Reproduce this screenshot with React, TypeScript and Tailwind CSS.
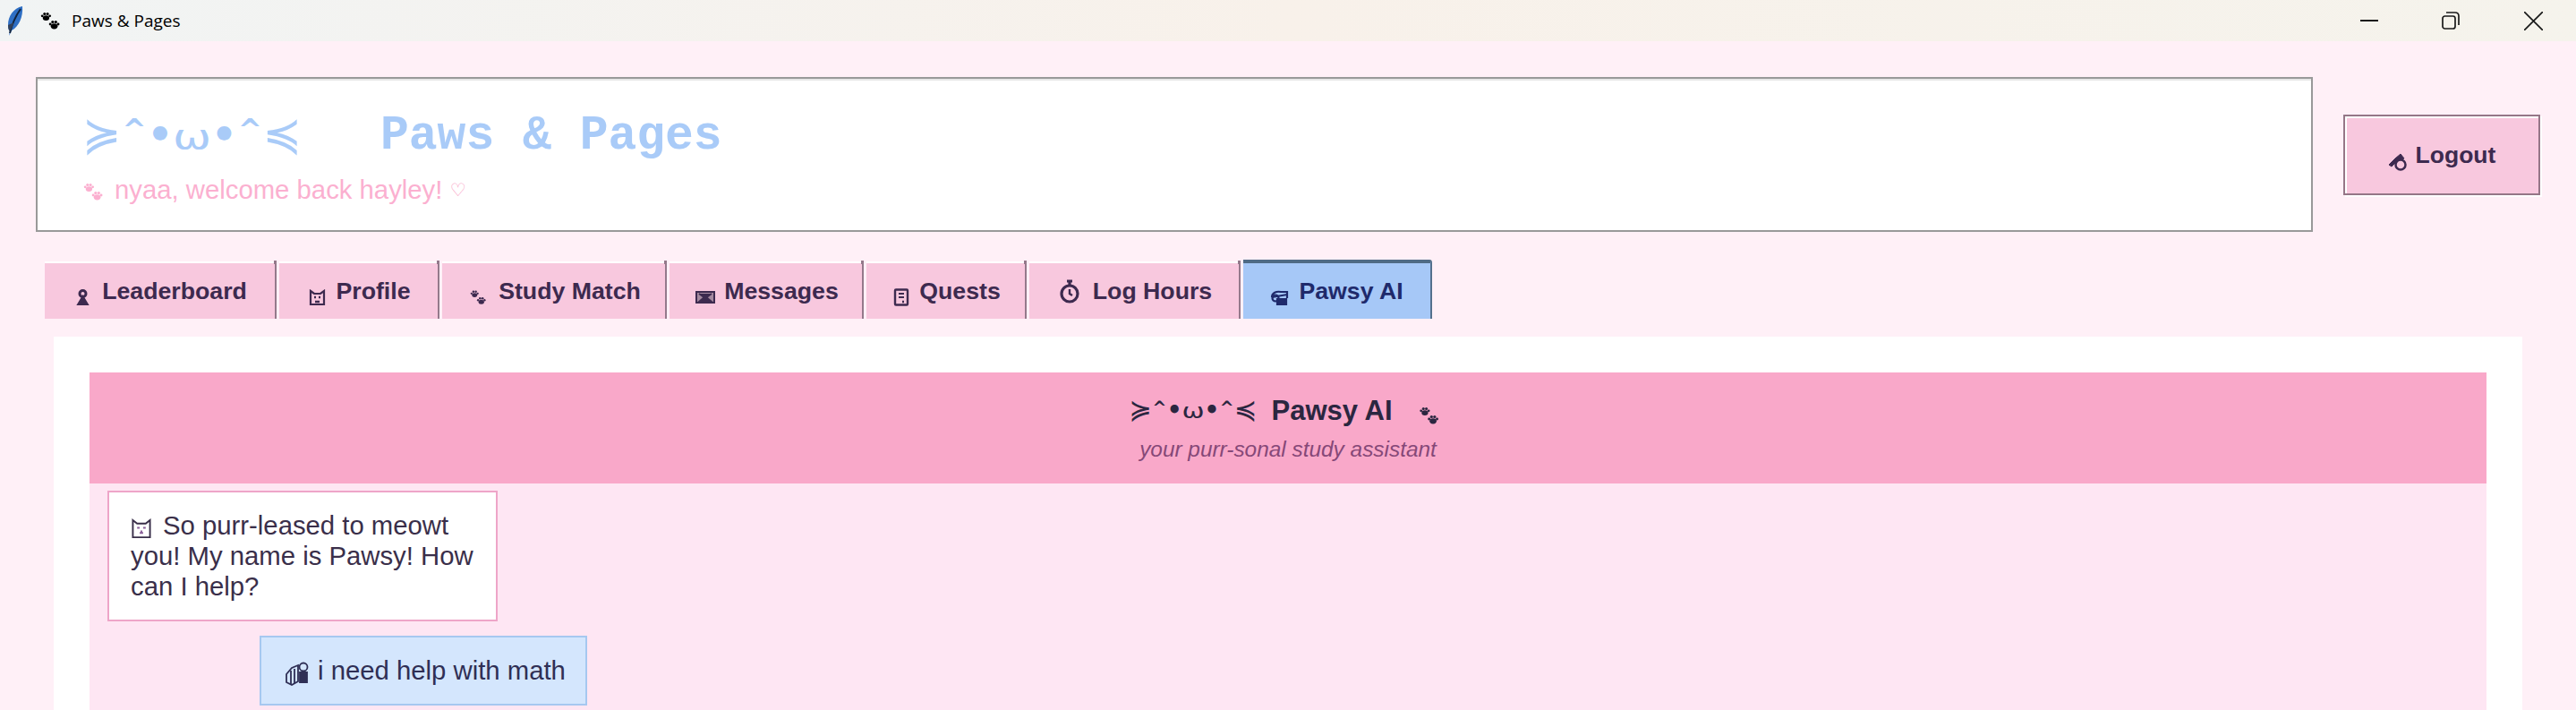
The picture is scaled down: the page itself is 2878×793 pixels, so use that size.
import React from "react";

const arial = "font-['Liberation_Sans','Arial',sans-serif]";

const PawPrint = ({ cx, cy, r }: { cx: number; cy: number; r: number }) => (
  <g>
    <ellipse cx={cx} cy={cy + r * 0.45} rx={r} ry={r * 0.8} />
    <circle cx={cx - r * 1.15} cy={cy - r * 0.15} r={r * 0.38} />
    <circle cx={cx - r * 0.45} cy={cy - r * 0.8} r={r * 0.42} />
    <circle cx={cx + r * 0.45} cy={cy - r * 0.8} r={r * 0.42} />
    <circle cx={cx + r * 1.15} cy={cy - r * 0.15} r={r * 0.38} />
  </g>
);

const Paws = ({ className }: { className: string }) => (
  <svg viewBox="0 0 24 24" fill="currentColor" className={className}>
    <PawPrint cx={7} cy={7} r={4} />
    <PawPrint cx={17} cy={17} r={4.2} />
  </svg>
);

// the cat face, sizes are in em so it works for both headings
const Kaomoji = ({ className }: { className: string }) => (
  <span className={`inline-flex items-center font-['DejaVu_Sans',sans-serif] font-normal leading-none ${className}`}>
    <span className="text-[1.45em]">≽</span>
    <span className="-mt-[0.3em] ml-[0.02em] text-[0.9em] font-bold">^</span>
    <span className="mx-[0.02em] text-[1.25em] font-bold">•</span>
    <span className="mt-[0.15em] scale-x-[1.3] px-[0.1em] text-[1.1em]">ω</span>
    <span className="mx-[0.02em] text-[1.25em] font-bold">•</span>
    <span className="-mt-[0.3em] mr-[0.02em] text-[0.9em] font-bold">^</span>
    <span className="text-[1.45em]">≼</span>
  </span>
);

const TrophyIcon = () => (
  <svg viewBox="0 0 17 18" className="mt-[14px] h-[18px] w-[17px]" fill="none" stroke="currentColor" strokeWidth="3">
    <circle cx="8.5" cy="5" r="3.5" />
    <path d="M4 16.5 L8.5 9 L13 16.5 Z" fill="currentColor" />
  </svg>
);

const CatFaceIcon = () => (
  <svg viewBox="0 0 19 19" className="mt-[14px] h-[19px] w-[19px]" fill="none" stroke="currentColor" strokeWidth="2.2">
    <path d="M2 2 L6 5 H13 L17 2 V17 H2 Z" />
    <path d="M6 9 H8 M11 9 H13 M7 14 H12" strokeWidth="2.4" />
  </svg>
);

const EnvelopeIcon = () => (
  <svg viewBox="0 0 22 14" className="mt-[14px] h-[14px] w-[22px]" fill="none" stroke="currentColor" strokeWidth="2">
    <rect x="1" y="1" width="20" height="12" fill="#a58aa0" />
    <path d="M4 3 L11 8 L18 3 M4 12 L11 6 L18 12 Z" fill="currentColor" />
  </svg>
);

const BookIcon = () => (
  <svg viewBox="0 0 18 20" className="mt-[14px] h-[20px] w-[18px]" fill="none" stroke="currentColor" strokeWidth="2.4">
    <rect x="2" y="1.5" width="14" height="17" rx="1" />
    <path d="M6 6 H12 M6 10 H12" strokeWidth="2" />
    <path d="M10 15 H12" strokeWidth="2.5" />
  </svg>
);

const StopwatchIcon = () => (
  <svg viewBox="0 0 24 27" className="h-[27px] w-[24px]" fill="none" stroke="currentColor" strokeWidth="3.2">
    <path d="M9 2 H15 M12 2 V7" />
    <circle cx="12" cy="16" r="9" />
    <path d="M12 11 V16 L15 18" strokeWidth="2.4" />
  </svg>
);

const RobotCatIcon = () => (
  <svg viewBox="0 0 21 17" className="mt-[14px] h-[17px] w-[21px]" fill="none" stroke="currentColor" strokeWidth="2.2">
    <path d="M2 8 C2 3 7 1 12 2 L19 2 V9 M2 8 L19 5" />
    <circle cx="6" cy="9" r="3.5" />
    <path d="M8 10 H18 V16 H8 Z" fill="currentColor" />
  </svg>
);

const LogoutIcon = () => (
  <svg viewBox="0 0 21 20" className="mt-[14px] h-[20px] w-[21px]" fill="none" stroke="currentColor">
    <path d="M1 13 L8 6 L14 1 L18 6 L10 9 L4 15 Z" fill="currentColor" />
    <circle cx="14" cy="13" r="5.5" strokeWidth="2.5" />
  </svg>
);

const tabs = [
  { label: "Leaderboard", icon: <TrophyIcon />, width: "w-[259px]", gap: "gap-[13px]" },
  { label: "Profile", icon: <CatFaceIcon />, width: "w-[179px]", gap: "gap-[11px]" },
  { label: "Study Match", icon: <Paws className="mt-[14px] h-[18px] w-[20px]" />, width: "w-[251px]", gap: "gap-[13px]" },
  { label: "Messages", icon: <EnvelopeIcon />, width: "w-[217px]", gap: "gap-[10px]" },
  { label: "Quests", icon: <BookIcon />, width: "w-[179px]", gap: "gap-[11px]" },
  { label: "Log Hours", icon: <StopwatchIcon />, width: "w-[236px]", gap: "gap-[14px]" },
];

export default function App() {
  return (
    <div className={`h-[793px] w-[2878px] overflow-hidden bg-[#fff0f7] ${arial}`}>
      {/* title bar */}
      <div className="flex h-[46px] items-center bg-gradient-to-r from-[#f1f4f4] via-[#f8f1ea] to-[#f5f3ec]">
        <svg viewBox="0 0 18 32" className="ml-[8px] h-[34px] w-[18px]">
          <path d="M17 0 C7 2 1 11 1 21 C1 25 2 27 3 28 L2 33 L5 27 C13 23 18 12 17 0 Z" fill="#2f6fc4" />
          <path d="M15 3 C10 10 6 18 3 30" stroke="#10243f" strokeWidth="2" fill="none" />
          <path d="M1 21 C1 25 2 27 3 28 L8 18 Z" fill="#33415a" />
        </svg>
        <Paws className="ml-[18px] h-[22px] w-[24px] text-black" />
        <span className="ml-[12px] font-['Open_Sans',sans-serif] text-[19px] text-black">Paws &amp; Pages</span>
        <div className="ml-auto flex items-center">
          <svg viewBox="0 0 20 20" className="mr-[71px] h-[20px] w-[20px]" stroke="#1a1a1a" strokeWidth="2" fill="none">
            <path d="M0 10 H20" />
          </svg>
          <svg viewBox="0 0 20 20" className="mr-[72px] h-[20px] w-[20px]" stroke="#1a1a1a" strokeWidth="1.7" fill="none">
            <rect x="1" y="5" width="14" height="14" rx="2.5" />
            <path d="M5 1 H15 Q19 1 19 5 V15" />
          </svg>
          <svg viewBox="0 0 21 21" className="mr-[37px] h-[21px] w-[21px]" stroke="#1a1a1a" strokeWidth="1.7" fill="none">
            <path d="M0 0 L21 21 M21 0 L0 21" />
          </svg>
        </div>
      </div>

      <div className="px-[40px] pt-[40px]">
        {/* header */}
        <div className="flex items-center">
          <div className="h-[173px] w-[2544px] border-2 border-[#999999] bg-white pl-[50px] pt-[28px] shadow-[inset_0_2px_0_#e6e6e6]">
            <div className="flex h-[72px] items-center font-['Liberation_Mono',monospace] text-[53px] font-bold leading-none text-[#a9cbf8]">
              <span className="w-[333px]">
                <Kaomoji className="text-[36px]" />
              </span>
              <span>Paws &amp; Pages</span>
            </div>
            <div className="mt-[2px] flex items-center text-[29.3px] text-[#fbb0d0]">
              <Paws className="mr-[12px] mt-[4px] h-[22px] w-[24px]" />
              <span>nyaa, welcome back hayley!</span>
              <span className="ml-[8px] font-['DejaVu_Sans',sans-serif] text-[20px] font-bold text-[#f9a0c4]">♡</span>
            </div>
          </div>
          <button className="ml-[34px] flex h-[90px] w-[220px] items-center justify-center gap-[10px] border-2 border-[#957687] bg-[#f8c8de] pt-[3px] text-[26.5px] font-bold text-[#3d2a4f] shadow-[inset_2px_2px_0_#ffffff,2px_2px_0_#ffffff]">
            <LogoutIcon />
            Logout
          </button>
        </div>

        {/* tabs */}
        <div className="ml-[10px] mt-[31px] flex items-end gap-[3px]">
          {tabs.map((tab) => (
            <div
              key={tab.label}
              className={`relative flex h-[64px] items-center justify-center border-r-2 border-t-2 border-r-[#94798b] border-t-white bg-[#f8c8de] pl-[3px] text-[26.7px] font-bold text-[#3d2a4f] ${tab.width} ${tab.gap}`}
            >
              {tab.icon}
              <span>{tab.label}</span>
              <span className="absolute -right-[2px] -top-[3px] h-[4px] w-[3px] bg-[#94798b]" />
            </div>
          ))}
          <div className="flex h-[66px] w-[211px] items-center justify-center gap-[11px] rounded-tr-[3px] border-r-2 border-t-[4px] border-r-[#54708c] border-t-[#4f6b85] bg-[#a6c8f7] text-[26.7px] font-bold text-[#1f2a6b]">
            <RobotCatIcon />
            <span>Pawsy AI</span>
          </div>
        </div>

        {/* panel */}
        <div className="mx-[20px] mt-[20px] h-[500px] bg-white px-[40px] pt-[40px]">
          <div className="flex h-[124px] flex-col items-center bg-[#f9a8c9] pt-[20px]">
            <div className="flex h-[44px] items-center text-[31px] font-bold leading-none text-[#2b2640]">
              <Kaomoji className="text-[21px]" />
              <span className="ml-[16px]">Pawsy AI</span>
              <Paws className="ml-[28px] mr-[8px] mt-[12px] h-[22px] w-[25px]" />
            </div>
            <div className="mt-[10px] text-[24.4px] italic leading-none text-[#864878]">your purr-sonal study assistant</div>
          </div>

          <div className="h-[300px] bg-[#fee6f3] pl-[20px] pt-[8px]">
            <div className="w-[436px] whitespace-nowrap border-2 border-[#eea5c8] bg-white px-[24px] pb-[20px] pt-[20px] text-[29.3px] leading-[34px] text-[#3a2f4a]">
              <div className="flex items-center">
                <svg viewBox="0 0 24 24" fill="none" stroke="currentColor" strokeWidth="2" className="mr-[12px] mt-[6px] h-[23px] w-[24px]">
                  <path d="M2 2 L7 6 H17 L22 2 V22 H2 Z" />
                  <path d="M7 11 H10 M14 11 H17 M10 17 H14 M12 14 V16" stroke="#8a5f9a" />
                </svg>
                So purr-leased to meowt
              </div>
              <div>you! My name is Pawsy! How</div>
              <div>can I help?</div>
            </div>

            <div className="ml-[170px] mt-[16px] flex h-[78px] w-[366px] items-center border-2 border-[#a6c8f0] bg-[#d4e6fd] pl-[26px] text-[29.3px] text-[#2f2f55]">
              <svg viewBox="0 0 27 27" fill="none" stroke="currentColor" strokeWidth="1.8" className="mr-[10px] mt-[6px] h-[27px] w-[27px]">
                <path d="M2 14 L8 7 L15 4 V22 L8 26 L2 23 Z" />
                <circle cx="21" cy="6" r="4.5" />
                <path d="M7 10 V25 M11 8 V24" />
                <path d="M17 12 H25 V23 H17 Z" fill="currentColor" />
              </svg>
              i need help with math
            </div>
          </div>
        </div>
      </div>
    </div>
  );
}
